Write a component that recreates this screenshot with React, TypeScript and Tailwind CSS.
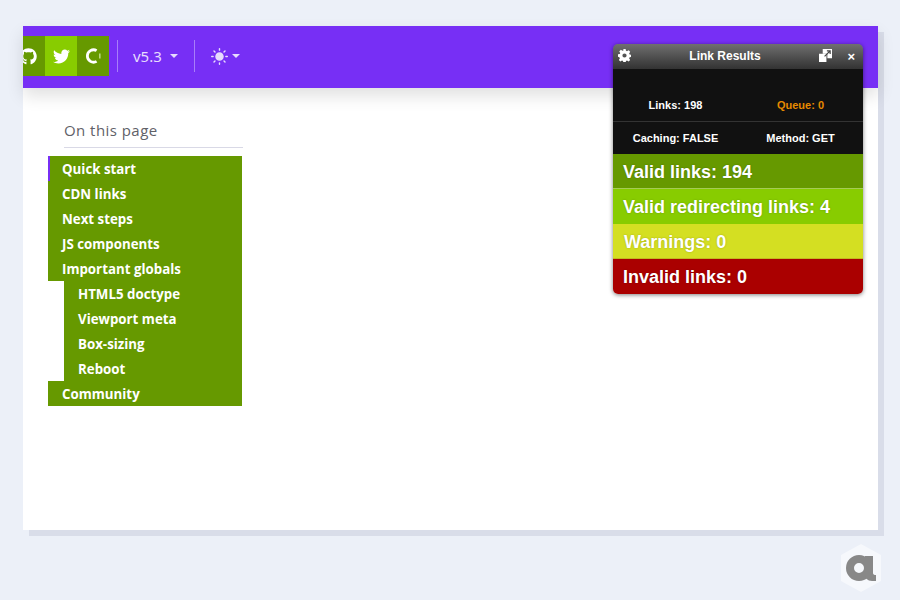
import { FaGithub, FaTwitter } from 'react-icons/fa';
import { FiSun } from 'react-icons/fi';

const tocItems = [
  { label: 'Quick start', active: true },
  { label: 'CDN links' },
  { label: 'Next steps' },
  { label: 'JS components' },
  { label: 'Important globals' },
];
const subItems = ['HTML5 doctype', 'Viewport meta', 'Box-sizing', 'Reboot'];

function Caret() {
  return <span className="w-0 h-0 border-x-[4px] border-x-transparent border-t-[4px] border-t-[#e6dcfd]" />;
}

function Navbar() {
  return (
    <div className="h-[62px] bg-[#772ff5] flex items-center shadow-[0_8px_16px_rgba(0,0,0,0.12)] text-[#e6dcfd]">
      <div className="flex h-10 -mt-[2px] bg-[#669900] text-white">
        <div className="w-[22px] overflow-hidden flex items-center justify-end pr-[8px]">
          <FaGithub className="shrink-0 text-[17px]" />
        </div>
        <div className="w-8 bg-[#88cc00] flex items-center justify-center">
          <FaTwitter className="text-[17px]" />
        </div>
        <div className="w-8 flex items-center justify-center">
          <svg viewBox="0 0 16 16" className="w-[16px] h-[16px]" fill="none" stroke="white" strokeWidth="2.8">
            <path d="M11.6 2.6A6.2 6.2 0 1 0 11.6 13.4" />
            <path d="M14.8 5.5v5" stroke="#b9d67f" strokeWidth="1.6" />
          </svg>
        </div>
      </div>
      <div className="w-px h-8 bg-[#a87ef9] ml-2 -mt-[2px]" />
      <div className="ml-[15px] flex items-center gap-2 -mt-[2px]">
        <span className="font-['Noto_Sans',sans-serif] text-[15px]">v5.3</span>
        <Caret />
      </div>
      <div className="w-px h-8 bg-[#a87ef9] ml-4 -mt-[2px]" />
      <div className="ml-4 flex items-center gap-1 -mt-[2px]">
        <FiSun className="text-[17px] fill-[#e6dcfd]" />
        <Caret />
      </div>
    </div>
  );
}

function Toc() {
  const row = 'h-[25px] flex items-center pt-[2px] font-bold text-[13.3px] text-white bg-[#669900]';
  return (
    <div className="w-[194px] ml-[25px] mt-[31px] font-['Open_Sans',sans-serif]">
      <div className="ml-4 h-[29px] border-b border-[#d9d9e6] text-[#5f6168] text-[15px] leading-[22px] tracking-[0.45px] -mr-px">
        On this page
      </div>
      <div className="mt-2 flex flex-col">
        {tocItems.map((t) => (
          <div key={t.label} className={t.active ? `${row} border-l-2 border-[#772ff5] pl-[12px]` : `${row} pl-[14px]`}>
            {t.label}
          </div>
        ))}
        <div className="ml-4 flex flex-col">
          {subItems.map((s) => (
            <div key={s} className={`${row} pl-[14px]`}>{s}</div>
          ))}
        </div>
        <div className={`${row} pl-[14px]`}>Community</div>
      </div>
    </div>
  );
}

function ResultRow({ label, className }: { label: string; className: string }) {
  return (
    <div className={`h-[35px] flex items-center pt-[2px] pl-[10px] text-[18px] font-bold text-white [text-shadow:0_0_2px_rgba(0,0,0,0.25)] ${className}`}>
      {label}
    </div>
  );
}

function LinkResults() {
  return (
    <div className="absolute left-[590px] top-[18px] w-[250px] rounded-[5px] overflow-hidden shadow-[0_1px_4px_rgba(0,0,0,0.5)] font-['Liberation_Sans',sans-serif]">
      <div className="h-[25px] bg-gradient-to-b from-[#707070] to-[#333333] flex items-center text-white relative">
        <svg viewBox="0 0 16 16" className="w-[13px] h-[13px] ml-[5px] -mt-[2px]" fill="white">
          <path fillRule="evenodd" d="M6.6 0h2.8l.4 2.2 1.3.6 1.9-1.3 2 2-1.3 1.9.6 1.3 2.2.4v2.8l-2.2.4-.6 1.3 1.3 1.9-2 2-1.9-1.3-1.3.6-.4 2.2H6.6l-.4-2.2-1.3-.6-1.9 1.3-2-2 1.3-1.9-.6-1.3L0 9.4V6.6l2.2-.4.6-1.3L1.5 3l2-2 1.9 1.3 1.3-.6zM8 5.4a2.6 2.6 0 1 0 0 5.2 2.6 2.6 0 0 0 0-5.2z" />
        </svg>
        <span className="flex-1 text-center text-[12px] font-bold -mt-[2px]">Link Results</span>
        <svg viewBox="0 0 14 14" className="w-[13px] h-[13px] mr-[31px] -mt-[2px]">
          <path fill="white" d="M0 5h8v9H0z" />
          <path fill="white" d="M4 0h10v10H9V5H4z" />
          <path fill="none" stroke="#444" strokeWidth="1.3" d="M6 8l6-6M8.5 2H12v3.5" />
        </svg>
        <span className="absolute right-[8px] top-[6px] text-[13px] leading-[13px] font-bold">×</span>
      </div>
      <div className="bg-[#111111] text-[11px] font-bold text-white">
        <div className="h-[53px] grid grid-cols-2 border-b border-[#333333] items-end pb-[8px]">
          <span className="text-center">Links: 198</span>
          <span className="text-center text-[#e68a00]">Queue: 0</span>
        </div>
        <div className="h-[32px] grid grid-cols-2 items-center">
          <span className="text-center">Caching: FALSE</span>
          <span className="text-center">Method: GET</span>
        </div>
      </div>
      <ResultRow label="Valid links: 194" className="bg-[#669900] border-b border-[#a5cc55]" />
      <ResultRow label="Valid redirecting links: 4" className="bg-[#88cc00]" />
      <ResultRow label="Warnings: 0" className="bg-[#d4df22] border-b border-[#c2b920] pl-[11px]" />
      <ResultRow label="Invalid links: 0" className="bg-[#aa0000]" />
    </div>
  );
}

export default function App() {
  return (
    <div className="w-[900px] h-[600px] bg-[#ecf0f8] pt-[26px] pl-[23px] relative overflow-hidden">
      <div className="w-[855px] h-[504px] bg-white relative shadow-[6px_6px_0_#d9dde9]">
        <Navbar />
        <Toc />
        <LinkResults />
      </div>
      <svg viewBox="0 0 46 50" className="absolute left-[838px] top-[543px] w-[46px] h-[50px]">
        <path fill="#f6f8fc" d="M23 1l20 11v26L23 49 3 38V12z" />
        <circle cx="21" cy="25" r="9" fill="none" stroke="#888888" strokeWidth="8" />
        <path fill="#888888" d="M27 13h8v17q0 2 3 2v6h-4q-7 0-7-7z" />
      </svg>
    </div>
  );
}
